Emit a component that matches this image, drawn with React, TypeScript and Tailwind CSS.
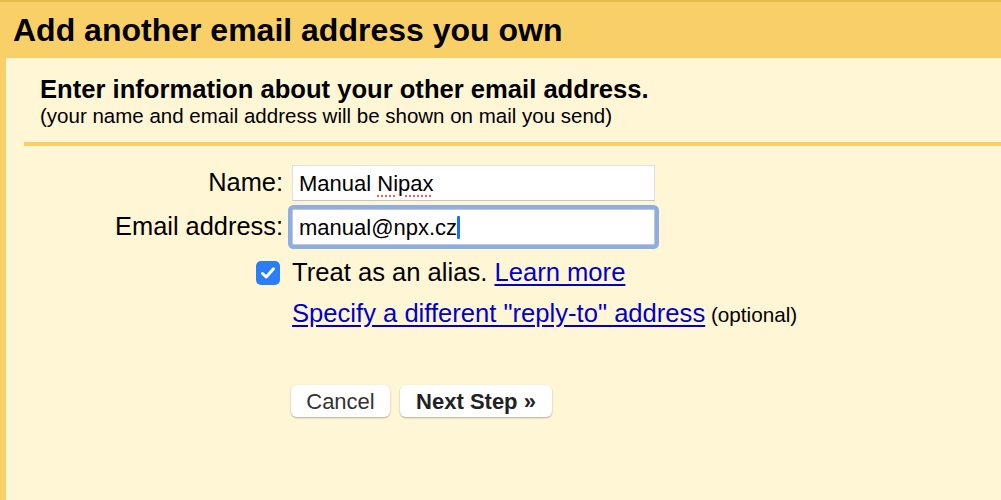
import React from 'react';

const App: React.FC = () => {
  return (
    <div className="w-[1001px] h-[500px] overflow-hidden bg-[#f9d068] border-t-2 border-[#e6bd4c] font-['Liberation_Sans',Arial,sans-serif] text-black">
      {/* header */}
      <div className="h-[56px] pl-[13px] flex items-center">
        <h1 className="text-[32px] leading-none font-bold">Add another email address you own</h1>
      </div>

      {/* body */}
      <div className="ml-[6px] h-[442px] bg-[#fff6d6]">
        <div className="pl-[34px] pt-[16px]">
          <h2 className="text-[25.6px] leading-[30px] font-bold">Enter information about your other email address.</h2>
          <p className="text-[20.5px] leading-[23px]">(your name and email address will be shown on mail you send)</p>
        </div>

        <div className="ml-[18px] mt-[15px] h-[4px] bg-[#f9d068]"></div>

        <div className="mt-[19px] grid grid-cols-[277px_1fr] gap-x-[9px] items-center">
          <label className="text-right text-[25.4px] leading-none">Name:</label>
          <div className="w-[363px] h-[36px] bg-white border border-[#e0e0e0] border-b-[#c4c4c4] flex items-center pl-[6px] text-[22px]">
            <span>Manual <span className="underline decoration-dotted decoration-[#e06666] underline-offset-[5px]">Nipax</span></span>
          </div>

          <label className="mt-[8px] text-right text-[25.4px] leading-none">Email address:</label>
          <div className="mt-[8px] w-[363px] h-[36px] bg-white border border-[#c8c8c8] rounded-[2px] shadow-[0_0_0_4px_#8caee6] flex items-center pl-[6px] text-[22px]">
            <span>manual@npx.cz</span>
            <span className="inline-block w-[3px] h-[23px] bg-[#1a6ff0] rounded-[1px]"></span>
          </div>

          <div className="mt-[15px] flex justify-end pr-[3px]">
            <div className="w-[24px] h-[24px] rounded-[5px] bg-[#2b7ef6] flex items-center justify-center">
              <svg width="18" height="18" viewBox="0 0 18 18" fill="none">
                <path d="M3.5 9.5 L7.2 13 L14.5 4.8" stroke="white" strokeWidth="3" strokeLinecap="round" strokeLinejoin="round" />
              </svg>
            </div>
          </div>
          <div className="mt-[15px] text-[25.6px] leading-none">
            Treat as an alias. <a href="#" className="text-[#0000cc] underline underline-offset-[3px]">Learn more</a>
          </div>

          <div></div>
          <div className="mt-[15px] leading-none">
            <a href="#" className="text-[25.6px] text-[#0000cc] underline underline-offset-[3px]">Specify a different "reply-to" address</a>
            <span className="text-[20.7px]"> (optional)</span>
          </div>

          <div></div>
          <div className="mt-[59px] flex gap-[10px] -ml-[1px]">
            <button className="w-[99px] h-[32px] bg-white rounded-[6px] shadow-[0_1px_2px_rgba(0,0,0,0.3)] text-[22px] text-[#333]">Cancel</button>
            <button className="w-[152px] h-[32px] bg-white rounded-[6px] shadow-[0_1px_2px_rgba(0,0,0,0.3)] text-[22px] font-bold text-[#222]">Next Step »</button>
          </div>
        </div>
      </div>
    </div>
  );
};

export default App;
